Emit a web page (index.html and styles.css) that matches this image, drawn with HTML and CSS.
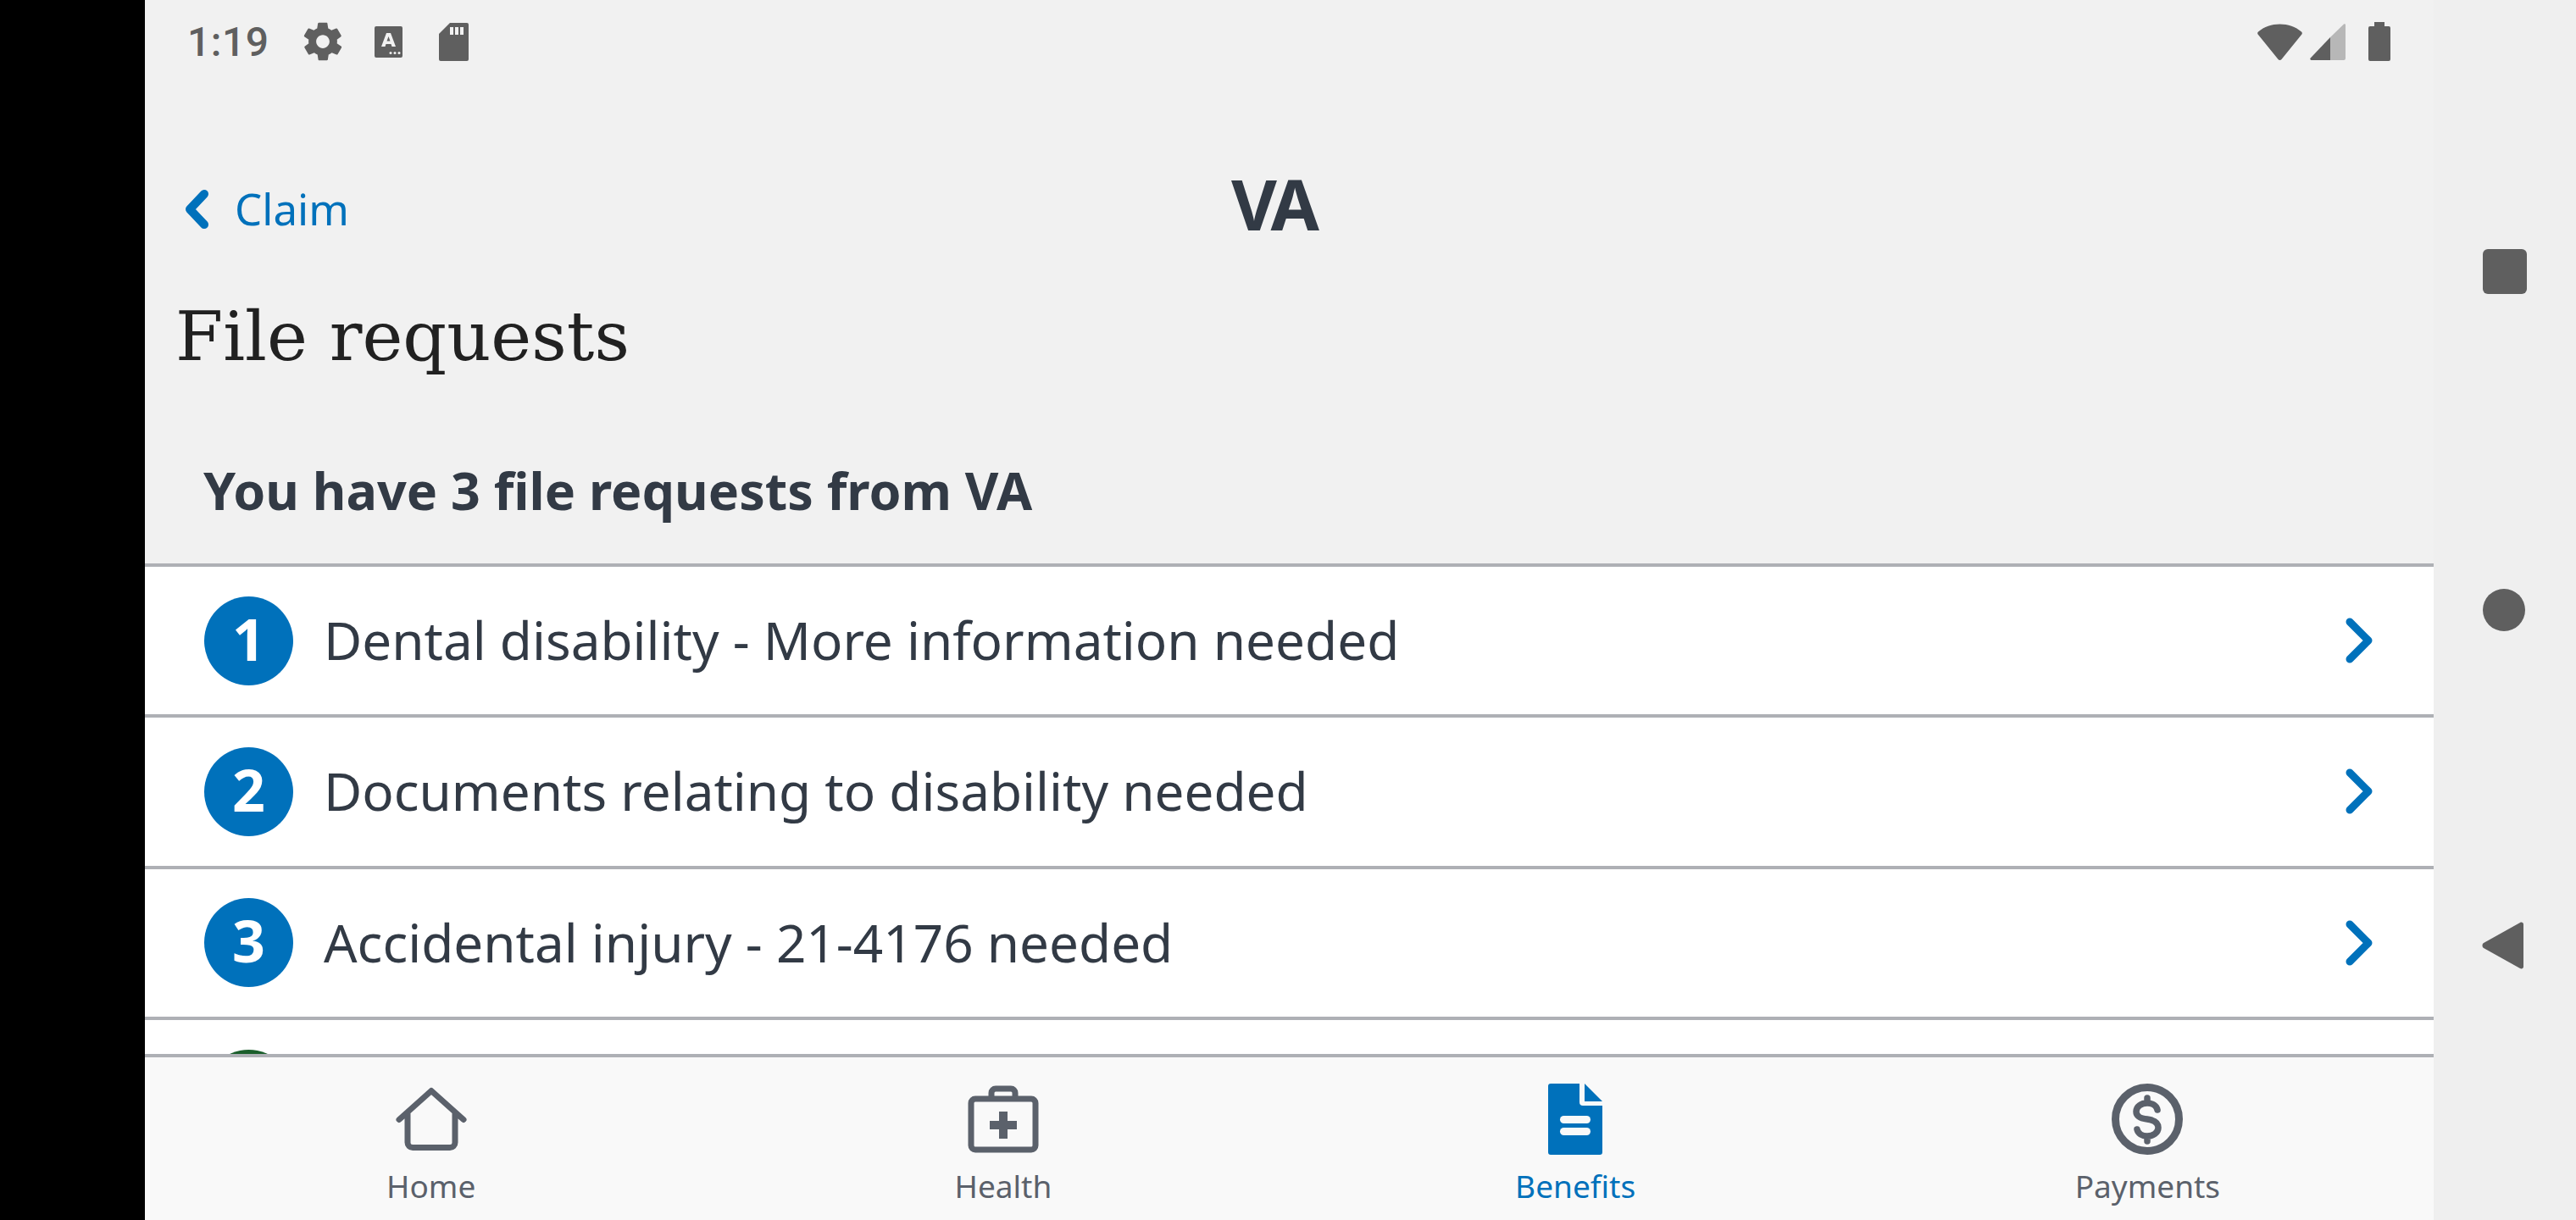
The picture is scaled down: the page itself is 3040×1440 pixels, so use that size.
FILE: index.html
```html
<!DOCTYPE html>
<html lang="en">
<head>
    <meta charset="UTF-8">
    <meta name="viewport" content="width=device-width, initial-scale=1.0">
    <title>File requests</title>
    <link rel="stylesheet" href="styles.css">
</head>
<body>

    <div class="black-strip"></div>

    <div class="screen">
        <!-- Android status bar -->
        <div class="status-bar">
            <span class="clock">1:19</span>
            <svg class="icon-gear" viewBox="0 0 24 24"><path d="M19.4 13c.1-.3.1-.7.1-1s0-.7-.1-1l2.1-1.600c.2-.2.2-.4.1-.6l-2-3.500c-.1-.2-.4-.3-.6-.2l-2.500 1c-.5-.4-1.100-.7-1.700-1l-.4-2.600c0-.2-.2-.4-.5-.4h-4c-.2 0-.4.2-.5.4l-.4 2.600c-.6.3-1.200.6-1.700 1l-2.500-1c-.2-.1-.5 0-.6.2l-2 3.500c-.1.2-.1.4.1.6L4.600 11c-.1.3-.1.7-.1 1s0 .7.1 1l-2.100 1.600c-.2.2-.2.4-.1.6l2 3.500c.1.2.4.3.6.2l2.500-1c.5.4 1.100.7 1.700 1l.4 2.600c0 .2.2.4.5.4h4c.2 0 .4-.2.5-.4l.4-2.600c.6-.3 1.200-.6 1.700-1l2.500 1c.2.1.5 0 .6-.2l2-3.500c.1-.2.1-.4-.1-.6L19.400 13zM12 15.500c-1.900 0-3.500-1.600-3.500-3.500s1.600-3.500 3.500-3.500 3.500 1.600 3.500 3.500-1.600 3.500-3.500 3.500z"/></svg>
            <svg class="icon-a" viewBox="0 0 33 37"><rect width="33" height="37" rx="2"/><path fill="#f1f1f1" d="M8 24 14 8h5l6 16h-4.500l-1-3h-6l-1 3zm6.500-6.500h4L16.500 12z"/><circle fill="#f1f1f1" cx="19" cy="31.500" r="1.500"/><circle fill="#f1f1f1" cx="24" cy="31.500" r="1.500"/><circle fill="#f1f1f1" cx="29" cy="31.500" r="1.500"/></svg>
            <svg class="icon-sd" viewBox="0 0 35 45"><path d="M13 0h20a2 2 0 0 1 2 2v41a2 2 0 0 1-2 2H2a2 2 0 0 1-2-2V13z"/><path fill="#f1f1f1" d="M13 5h4v9h-4zM19 5h4v9h-4zM25 5h4v9h-4z"/></svg>
            <div class="status-right">
                <svg class="icon-wifi" viewBox="0 0 53 43"><path d="M1 9.500C8 3.500 17 .5 26.500.500S45 3.500 52 9.500c1 1 1 2 .4 3L28.500 42c-1 1.300-3 1.300-4 0L.6 12.500c-.6-1-.6-2 .4-3z"/></svg>
                <svg class="icon-signal" viewBox="0 0 42 43"><path fill="#b7b7b7" d="M40 0.500c1-.8 2-.2 2 1V41a2 2 0 0 1-2 2H24V16z"/><path d="M24 16v27H2c-1.500 0-2.300-1.500-1.300-2.600z"/></svg>
                <svg class="icon-battery" viewBox="0 0 26 46"><path d="M7 0h12v5h5a2 2 0 0 1 2 2v37a2 2 0 0 1-2 2H2a2 2 0 0 1-2-2V7a2 2 0 0 1 2-2h5z"/></svg>
            </div>
        </div>

        <!-- Nav header -->
        <div class="header">
            <a class="back-link">
                <svg class="icon-back" viewBox="0 0 29 46"><path d="M23 5 6 23l17 18" fill="none" stroke="#0071bb" stroke-width="10" stroke-linecap="round" stroke-linejoin="round"/></svg>
                <span>Claim</span>
            </a>
            <div class="logo">VA</div>
            <div></div>
        </div>

        <h1 class="page-title">File requests</h1>
        <h2 class="sub-title">You have 3 file requests from VA</h2>

        <div class="list">
            <div class="list-row">
                <span class="step">1</span>
                <span class="row-text">Dental disability - More information needed</span>
                <svg class="icon-chevron" viewBox="0 0 32 54"><path d="M5 5l22 22L5 49" fill="none" stroke="#0071bb" stroke-width="9" stroke-linecap="round" stroke-linejoin="round"/></svg>
            </div>
            <div class="list-row">
                <span class="step">2</span>
                <span class="row-text">Documents relating to disability needed</span>
                <svg class="icon-chevron" viewBox="0 0 32 54"><path d="M5 5l22 22L5 49" fill="none" stroke="#0071bb" stroke-width="9" stroke-linecap="round" stroke-linejoin="round"/></svg>
            </div>
            <div class="list-row">
                <span class="step">3</span>
                <span class="row-text">Accidental injury - 21-4176 needed</span>
                <svg class="icon-chevron" viewBox="0 0 32 54"><path d="M5 5l22 22L5 49" fill="none" stroke="#0071bb" stroke-width="9" stroke-linecap="round" stroke-linejoin="round"/></svg>
            </div>
            <div class="list-row list-row-short">
                <span class="step step-done"></span>
            </div>
        </div>

        <!-- Bottom tabs -->
        <div class="tab-bar">
            <div class="tab">
                <svg viewBox="0 0 84 75"><path d="M4 38 42 4l38 34M14 30v35a6 6 0 0 0 6 6h44a6 6 0 0 0 6-6V30" fill="none" stroke="#5b616b" stroke-width="7" stroke-linecap="round" stroke-linejoin="round"/></svg>
                <span>Home</span>
            </div>
            <div class="tab">
                <svg viewBox="0 0 84 80"><path d="M28 15V9a5 5 0 0 1 5-5h18a5 5 0 0 1 5 5v6" fill="none" stroke="#5b616b" stroke-width="7"/><rect x="4" y="16" width="76" height="60" rx="5" fill="none" stroke="#5b616b" stroke-width="7"/><path d="M37 31h10v11h11v10H47v11H37V52H26V42h11z" fill="#5b616b"/></svg>
                <span>Health</span>
            </div>
            <div class="tab tab-active">
                <svg viewBox="0 0 64 84"><path d="M3 0h34v22a4 4 0 0 0 4 4h23v55a3 3 0 0 1-3 3H3a3 3 0 0 1-3-3V3a3 3 0 0 1 3-3z" fill="#0071bb"/><path d="M43 0l21 21H43z" fill="#0071bb"/><rect x="14" y="38" width="36" height="9" rx="4.500" fill="#f9f9f9"/><rect x="14" y="52" width="36" height="9" rx="4.500" fill="#f9f9f9"/></svg>
                <span>Benefits</span>
            </div>
            <div class="tab">
                <svg viewBox="0 0 84 84"><circle cx="42" cy="42" r="37.500" fill="none" stroke="#5b616b" stroke-width="9"/><path d="M54 31c-1-5-6-8-12-8-7 0-13 4-13 10s5 8 13 9c8 1 13 4 13 10s-6 10-13 10c-6 0-11-3-12-8M42 17v5M42 63v5" fill="none" stroke="#5b616b" stroke-width="7.500" stroke-linecap="round"/></svg>
                <span>Payments</span>
            </div>
        </div>
    </div>

    <!-- Android nav buttons -->
    <div class="nav-rail">
        <div class="nav-square"></div>
        <div class="nav-circle"></div>
        <svg class="nav-back" viewBox="0 0 49 56"><path d="M2 25 45 1c2-1 4 0 4 2v50c0 2-2 3-4 2L2 31c-2-1-2-5 0-6z"/></svg>
    </div>

</body>
</html>
```

FILE: styles.css
```css
/* General body styling */
body {
    margin: 0;
    width: 3040px;
    height: 1440px;
    display: flex;
    overflow: hidden;
    font-family: 'Noto Sans', sans-serif;
    color: #323a45;
    background-color: #000;
}

.black-strip {
    width: 171px;
    background-color: #000;
}

/* App screen column */
.screen {
    width: 2701px;
    display: flex;
    flex-direction: column;
    background-color: #f1f1f1;
}

/* Status bar */
.status-bar {
    height: 98px;
    display: flex;
    align-items: center;
    padding: 0 51px 0 50px;
    fill: #5f5f5f;
}

.clock {
    font-family: 'Roboto', sans-serif;
    font-size: 48px;
    font-weight: 500;
    letter-spacing: 0.5px;
    color: #5f5f5f;
    width: 138px;
}

.icon-gear {
    width: 54px;
    height: 54px;
    margin-left: -5px;
}

.icon-a {
    width: 33px;
    height: 37px;
    margin-left: 34px;
}

.icon-sd {
    width: 35px;
    height: 45px;
    margin-left: 43px;
}

.status-right {
    margin-left: auto;
    display: flex;
    align-items: center;
    fill: #5f5f5f;
}

.icon-wifi {
    width: 53px;
    height: 43px;
}

.icon-signal {
    width: 42px;
    height: 43px;
    margin-left: 9px;
}

.icon-battery {
    width: 26px;
    height: 46px;
    margin-left: 27px;
}

/* Header with back link and logo */
.header {
    height: 180px;
    margin-top: 59px;
    padding: 0 81px 0 47px;
    display: grid;
    grid-template-columns: 1fr auto 1fr;
    align-items: center;
}

.back-link {
    display: flex;
    align-items: center;
    gap: 30px;
    font-size: 51px;
    color: #0071bb;
}

.back-link span {
    margin-top: -2px;
}

.icon-back {
    width: 29px;
    height: 46px;
}

.logo {
    font-size: 83px;
    font-weight: 700;
    letter-spacing: -4px;
    line-height: 1;
    margin: -16px 0 0 -3px;
}

.page-title {
    margin: 12px 0 0 36px;
    font-family: 'DejaVu Serif', serif;
    font-size: 81px;
    font-weight: normal;
    color: #212121;
    line-height: 96px;
}

.sub-title {
    margin: 88px 0 0 69px;
    font-size: 61px;
    font-weight: 700;
    line-height: 92px;
}

/* File request rows */
.list {
    flex: 1;
    margin-top: 40px;
    overflow: hidden;
    border-top: 4px solid #aeb0b5;
    background-color: #fff;
}

.list-row {
    height: 178.33px;
    box-sizing: border-box;
    padding: 0 72px 0 70px;
    display: flex;
    align-items: center;
    border-bottom: 4px solid #aeb0b5;
}

.list-row-short {
    align-items: flex-start;
    padding-top: 35px;
    border-bottom: none;
}

.step {
    width: 105px;
    height: 105px;
    flex: none;
    border-radius: 50%;
    background-color: #0071bb;
    color: #fff;
    font-size: 68px;
    font-weight: 700;
    line-height: 100px;
    text-align: center;
}

.step-done {
    background-color: #1a5e2b;
}

.row-text {
    margin: -2px 0 0 36px;
    font-size: 62px;
    font-variant-ligatures: none;
    flex: 1;
}

.icon-chevron {
    width: 32px;
    height: 54px;
    flex: none;
}

/* Bottom tabs */
.tab-bar {
    height: 192px;
    flex: none;
    border-top: 4px solid #aeb0b5;
    background-color: #f9f9f9;
    display: grid;
    grid-template-columns: repeat(4, 1fr);
}

.tab {
    display: flex;
    flex-direction: column;
    align-items: center;
    padding-top: 31px;
    font-size: 37px;
    color: #5b616b;
}

.tab svg {
    width: 84px;
    height: 84px;
}

.tab span {
    margin-top: 11px;
}

.tab-active {
    color: #0071bb;
}

/* Android nav rail */
.nav-rail {
    width: 168px;
    background-color: #efefef;
    display: flex;
    flex-direction: column;
    align-items: center;
    padding: 294px 0 0;
    fill: #5f5f5f;
}

.nav-square {
    width: 52px;
    height: 53px;
    border-radius: 6px;
    background-color: #5f5f5f;
}

.nav-circle {
    width: 50px;
    height: 50px;
    margin: 348px 2px 0 0;
    border-radius: 50%;
    background-color: #5f5f5f;
}

.nav-back {
    width: 49px;
    height: 56px;
    margin-top: 343px;
    margin-right: 5px;
}
```
